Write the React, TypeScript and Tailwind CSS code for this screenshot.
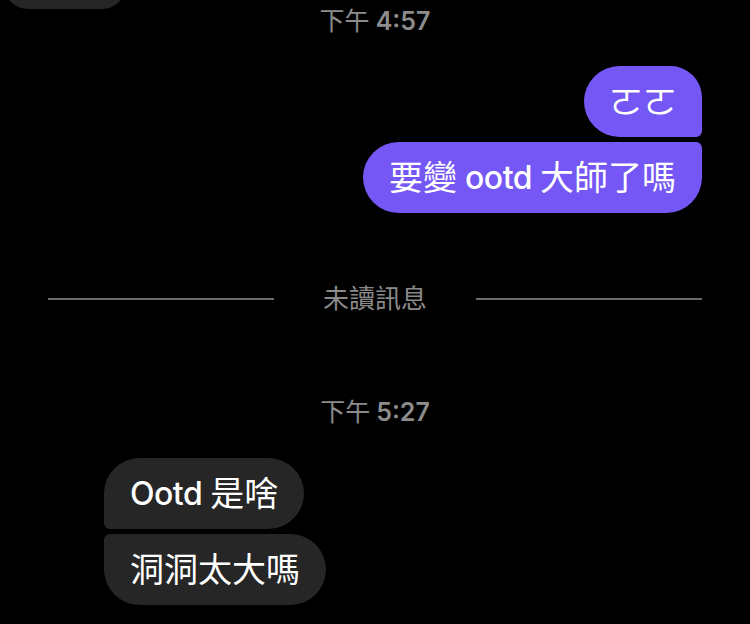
import React from "react";

const font = "font-['Inter','Noto_Sans_CJK_TC',sans-serif]";

const TimeStamp: React.FC<{ label: string; time: string; className?: string }> = ({ label, time, className }) => (
  <div className={`flex justify-center text-[25px] leading-[25px] text-[#8c8c8c] ${className ?? ""}`}>
    <span>{label}</span>
    <span className="ml-[6px] font-semibold">{time}</span>
  </div>
);

const bubble = "h-[71px] flex items-center text-white text-[34px] leading-[34px]";

const App: React.FC = () => {
  return (
    <div className={`w-[750px] h-[624px] bg-black overflow-hidden flex flex-col ${font}`}>
      {/* bubble cut off at the top */}
      <div className="-mt-[62px] ml-[4px] w-[122px] h-[71px] rounded-[24px] bg-[#262626]" />

      <TimeStamp label="下午" time="4:57" />

      {/* sent */}
      <div className="mt-[32px] pr-[48px] flex flex-col items-end gap-[5px]">
        <div className={`${bubble} px-[25px] rounded-l-[36px] rounded-tr-[32px] rounded-br-[6px] bg-[#7457f4]`}>
          ㄛㄛ
        </div>
        <div className={`${bubble} px-[26px] rounded-l-[36px] rounded-tr-[6px] rounded-br-[36px] bg-[#7457f4]`}>
          要變<span className="mx-[8px] font-medium text-[32px] tracking-[-0.5px]">ootd</span>大師了嗎
        </div>
      </div>

      {/* unread divider */}
      <div className="mt-[73px] px-[48px] flex items-center">
        <div className="flex-1 h-[2px] bg-[#6b6b6b]" />
        <span className="mx-[49px] text-[26px] leading-[25px] text-[#8a8a8a]">未讀訊息</span>
        <div className="flex-1 h-[2px] bg-[#6b6b6b]" />
      </div>

      <TimeStamp label="下午" time="5:27" className="mt-[89px]" />

      {/* received */}
      <div className="mt-[33px] pl-[104px] flex flex-col items-start gap-[5px]">
        <div className={`${bubble} px-[26px] rounded-r-[36px] rounded-tl-[36px] rounded-bl-[6px] bg-[#262626]`}>
          <span className="mr-[8px] font-medium text-[32px] tracking-[-0.5px]">Ootd</span>是啥
        </div>
        <div className={`${bubble} px-[26px] rounded-r-[36px] rounded-tl-[6px] rounded-bl-[36px] bg-[#262626]`}>
          洞洞太大嗎
        </div>
      </div>
    </div>
  );
};

export default App;
